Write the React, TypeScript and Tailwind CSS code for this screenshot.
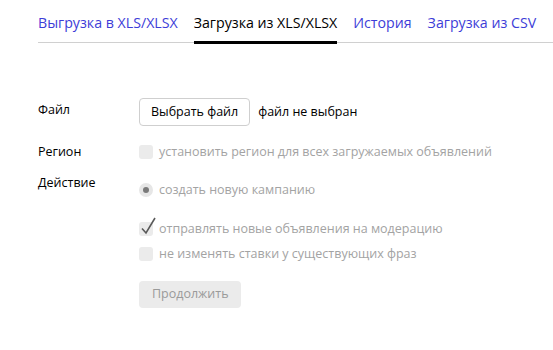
import React from "react";

const tabs = [
  { label: "Выгрузка в XLS/XLSX", active: false },
  { label: "Загрузка из XLS/XLSX", active: true },
  { label: "История", active: false },
  { label: "Загрузка из CSV", active: false },
];

function Box({ checked }: { checked?: boolean }) {
  return (
    <span className="relative inline-block w-[14px] h-[14px] shrink-0 rounded-[3px] bg-[#ebebeb]">
      {checked && (
        <svg className="absolute left-[1px] top-[-5px]" width="16" height="18" viewBox="0 0 16 18">
          <path d="M2 11.5 L6 16 L15 1" fill="none" stroke="#595959" strokeWidth="1.6" />
        </svg>
      )}
    </span>
  );
}

function Radio() {
  return (
    <span className="inline-flex items-center justify-center w-[14px] h-[14px] shrink-0 rounded-full bg-[#e6e6e6]">
      <span className="w-[6px] h-[6px] rounded-full bg-[#7a7a7a]" />
    </span>
  );
}

export default function App() {
  return (
    <div className="w-[553px] h-[350px] bg-white overflow-hidden pl-[38px] text-[12.5px] text-black" style={{ fontFamily: '"Open Sans", "Noto Sans", sans-serif' }}>
      <div className="flex gap-[16px] border-b border-[#d0d0d0] h-[43px] pt-[12px] text-[14.2px]">
        {tabs.map((t) => (
          <div
            key={t.label}
            className={
              t.active
                ? "h-[32px] border-b-[3px] border-black text-black"
                : "h-[32px] text-[#3d3dd8]"
            }
          >
            {t.label}
          </div>
        ))}
      </div>

      <div className="mt-[55px] flex items-center h-[28px]">
        <div className="w-[101px] mb-[3px]">Файл</div>
        <button className="h-[28px] px-[11px] bg-white border border-[#cfcfcf] rounded-[4px] text-black">Выбрать файл</button>
        <span className="ml-[8px]">файл не выбран</span>
      </div>

      <div className="mt-[17px] flex items-center h-[18px]">
        <div className="w-[101px]">Регион</div>
        <Box />
        <span className="ml-[6px] text-[#a3a3a3]">установить регион для всех загружаемых объявлений</span>
      </div>

      <div className="mt-[13px] flex items-start">
        <div className="w-[101px] leading-[18px]">Действие</div>
        <div className="flex flex-col">
          <div className="flex items-center h-[18px] mt-[7px]">
            <Radio />
            <span className="ml-[6px] text-[#a3a3a3]">создать новую кампанию</span>
          </div>
          <div className="flex items-center h-[18px] mt-[21px]">
            <Box checked />
            <span className="ml-[6px] text-[#a3a3a3]">отправлять новые объявления на модерацию</span>
          </div>
          <div className="flex items-center h-[18px] mt-[7px]">
            <Box />
            <span className="ml-[6px] text-[#a3a3a3]">не изменять ставки у существующих фраз</span>
          </div>
          <button className="mt-[18px] w-[102px] h-[27px] rounded-[4px] bg-[#ebebeb] text-[#9a9a9a] text-left pl-[13px]">Продолжить</button>
        </div>
      </div>
    </div>
  );
}
